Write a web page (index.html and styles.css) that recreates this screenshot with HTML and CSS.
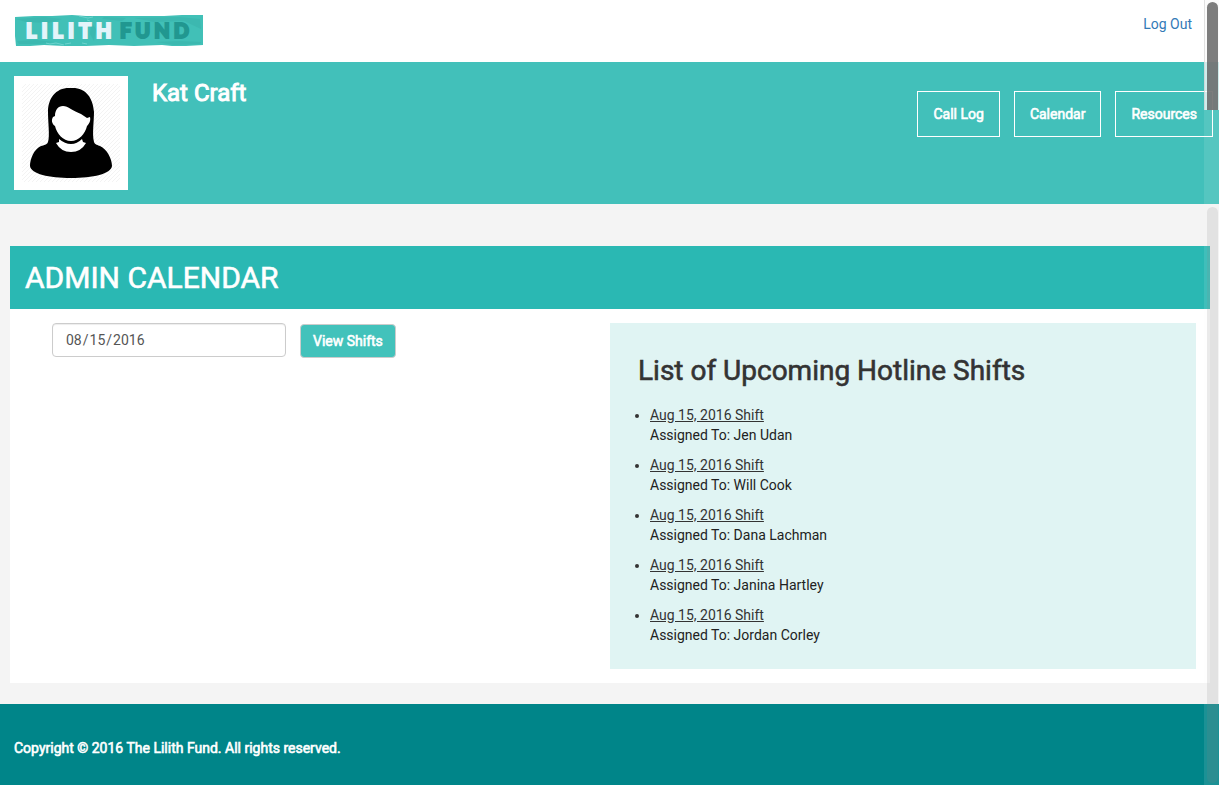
FILE: index.html
```html
<!DOCTYPE html>
<html lang="en-US">
<head>
<meta charset="utf-8">
<meta name="viewport" content="width=device-width, initial-scale=1">
<title>Admin Calendar - Lilith Fund</title>
<link rel="stylesheet" href="styles.css">
</head>
<body>
<header class="topbar">
  <a class="logo" href="#" aria-label="Lilith Fund">
    <svg width="190" height="34" viewBox="0 0 190 34">
      <path fill="#41c0b7" d="M1 3 L20 2 L38 2 L58 1 L72 2 L92 2 L120 2 L150 2 L168 1 L189 1 L189 12 L189 22 L189 31 L172 32 L158 32 L148 31 L120 32 L95 31 L72 32 L50 32 L30 31 L16 32 L2 32 L1 22 L1 12 Z"/>
      <g fill="#36aea6" opacity=".4">
        <path d="M2 5 L30 3 L48 5 L34 9 L12 8 Z M120 4 L165 3 L186 5 L187 15 L170 7 L140 8 Z M90 3 L112 4 L108 7 L88 5 Z"/>
        <path d="M3 27 L22 26 L40 28 L24 30 L5 30 Z M142 28 L165 27 L187 28 L186 30 L160 31 Z M77 8 L82 15 L80 27 L76 20 Z"/>
      </g>
      <g fill="none" stroke="#8be0dc" stroke-width="1" opacity=".6">
        <path d="M65 2 L74 4 L79 3 M73 6 L76 7 M32 29 L36 30 L42 29 L50 31 M51 30 L57 29 M68 29 L73 30"/>
      </g>
      <text class="logo-text logo-first" x="12" y="24">LILITH</text>
      <text class="logo-text logo-second" x="106" y="24">FUND</text>
    </svg>
  </a>
  <a class="logout" href="#">Log Out</a>
</header>

<section class="profile">
  <svg class="avatar" viewBox="0 0 114 114" role="img" aria-label="Profile picture">
    <defs>
      <pattern id="hatch" width="4" height="4" patternUnits="userSpaceOnUse">
        <path d="M0 4 L4 0" stroke="#f3f3f3" stroke-width="1"/>
      </pattern>
    </defs>
    <path fill="#fff" d="M0 0H114V114H0Z"/>
    <path fill="url(#hatch)" d="M8 8H106V106H8Z"/>
    <path d="M57 12 C42 11 34 22 34 36 C34 47 36 60 34 66 C33 69 30 69 27 70 C20 73 16 83 16 90 C17 98 35 102 57 102 C79 102 97 98 98 90 C98 83 93 73 86 70 C84 69 81 69 80 66 C78 58 80 46 80 36 C79 21 71 11 57 12 Z"/>
    <path fill="#fff" d="M49 30 C54 30 59 35 67 38 L73 42 L76 41 C77 45 75 48 73 50 C71 58 65 65 57 65 C49 65 43 58 41 50 C38 48 37 44 39 41 L41 40 C41 34 44 30 49 30 Z"/>
    <path fill="#fff" d="M45 63 Q51 68 57 68 Q63 68 68 63 L69 66 L72 67 Q67 76 57 76 Q47 76 42 67 L45 66 Z"/>
  </svg>
  <h3 class="user-name">Kat Craft</h3>
  <nav class="nav">
    <a class="nav-link" href="#">Call Log</a>
    <a class="nav-link" href="#">Calendar</a>
    <a class="nav-link" href="#">Resources</a>
  </nav>
</section>

<main class="main">
  <div class="card">
    <h1 class="card-title">ADMIN CALENDAR</h1>
    <div class="card-body">
      <form class="shift-form">
        <input class="date" type="date" value="2016-08-15" aria-label="Shift date">
        <button class="view" type="button">View Shifts</button>
      </form>
      <section class="shifts">
        <h2 class="shifts-title">List of Upcoming Hotline Shifts</h2>
        <ul class="shift-list">
          <li><a href="#">Aug 15, 2016 Shift</a><p>Assigned To: Jen Udan</p></li>
          <li><a href="#">Aug 15, 2016 Shift</a><p>Assigned To: Will Cook</p></li>
          <li><a href="#">Aug 15, 2016 Shift</a><p>Assigned To: Dana Lachman</p></li>
          <li><a href="#">Aug 15, 2016 Shift</a><p>Assigned To: Janina Hartley</p></li>
          <li><a href="#">Aug 15, 2016 Shift</a><p>Assigned To: Jordan Corley</p></li>
        </ul>
      </section>
    </div>
  </div>
</main>

<footer class="footer">Copyright © 2016 The Lilith Fund. All rights reserved.</footer>

<div class="scroll scroll-page"><div class="thumb"></div></div>
<div class="scroll scroll-content"><div class="thumb"></div></div>
</body>
</html>
```
FILE: styles.css
```css
* { box-sizing: border-box; }

body {
  margin: 0;
  min-height: 100vh;
  display: flex;
  flex-direction: column;
  background: #f4f4f4;
  color: #333;
  font: 14px/20px Roboto, "Liberation Sans", sans-serif;
  overflow-x: hidden;
}

h1, h2, h3, p { margin: 0; font-weight: 400; }

/* Regular letterforms with a heavier outline */
.user-name, .nav-link, .card-title, .view, .shifts-title, .footer {
  font-weight: 400;
  -webkit-text-stroke: 0.6px currentColor;
}
.user-name { -webkit-text-stroke-width: 1px; }

.topbar {
  display: flex;
  justify-content: space-between;
  align-items: flex-start;
  padding: 14px 27px 14px 14px;
  background: #fff;
}
.logo { display: flex; }
.logo-text {
  font: 900 20px Lato, sans-serif;
  letter-spacing: 4px;
  stroke-width: 2px;
}
.logo-first { fill: #e3f4fa; stroke: #e3f4fa; letter-spacing: 5px; }
.logo-second { fill: #219790; stroke: #219790; }
.logout { color: #337ab7; text-decoration: none; }

.profile {
  display: flex;
  align-items: flex-start;
  padding: 14px 6px 14px 14px;
  background: #42c0ba;
  color: #fff;
}
.avatar { width: 114px; height: 114px; flex: none; }
.user-name {
  margin-left: 24px;
  padding-top: 4px;
  font-size: 24px;
  line-height: 26px;
}
.nav { display: flex; gap: 14px; margin-left: auto; padding-top: 15px; }
.nav-link {
  padding: 12px 15px;
  border: 1px solid #fff;
  color: #fff;
  text-decoration: none;
}

.main { flex: 1; padding: 42px 9px 21px 10px; }
.card { background: #fff; }
.card-title {
  padding: 15px;
  background: #2ab8b3;
  color: #fff;
  font-size: 30px;
  line-height: 33px;
}
.card-body {
  display: grid;
  grid-template-columns: 1fr 1fr;
  align-items: start;
  padding: 14px;
}
.shift-form { display: flex; gap: 14px; padding-left: 28px; }
.date {
  width: 234px;
  height: 34px;
  padding: 6px 12px;
  border: 1px solid #ccc;
  border-radius: 4px;
  background: #fff;
  box-shadow: inset 0 1px 1px rgba(0, 0, 0, .075);
  color: #555;
  font: inherit;
}
.date::-webkit-calendar-picker-indicator { display: none; }
.view {
  margin-top: 1px;
  height: 34px;
  padding: 6px 12px;
  border: 1px solid #ccc;
  border-radius: 4px;
  background: #42c2bb;
  color: #fff;
  font: inherit;
}
.shifts {
  padding: 32px 28px 14px;
  background: #e0f4f3;
}
.shifts-title {
  font-size: 28px;
  line-height: 31px;
}
.shift-list { margin: 19px 0 0; padding: 0 0 0 12px; }
.shift-list li { margin-bottom: 10px; }
.shift-list a { color: #333; text-decoration: underline; }
.shift-list p { color: #222; }

.footer {
  padding: 34px 14px 27px;
  background: #008589;
  color: #fff;
}

/* Overlay scroll bars */
.scroll {
  position: fixed;
  right: 0;
  width: 15px;
  padding: 2px 1px 2px 3px;
}
.scroll .thumb { height: 100%; border-radius: 6px; }
.scroll-page {
  top: 0;
  height: 110px;
  padding-bottom: 0;
  border-left: 1px solid rgba(200, 200, 200, .5);
  background: rgba(250, 250, 250, .78);
  padding-left: 2px;
}
.scroll-page .thumb { background: rgba(90, 90, 90, .78); border-radius: 6px 6px 0 0; }
.scroll-content {
  top: 110px;
  bottom: 0;
  padding-top: 97px;
  background: rgba(245, 245, 245, .11);
}
.scroll-content .thumb { background: rgba(130, 130, 130, .16); }
```
